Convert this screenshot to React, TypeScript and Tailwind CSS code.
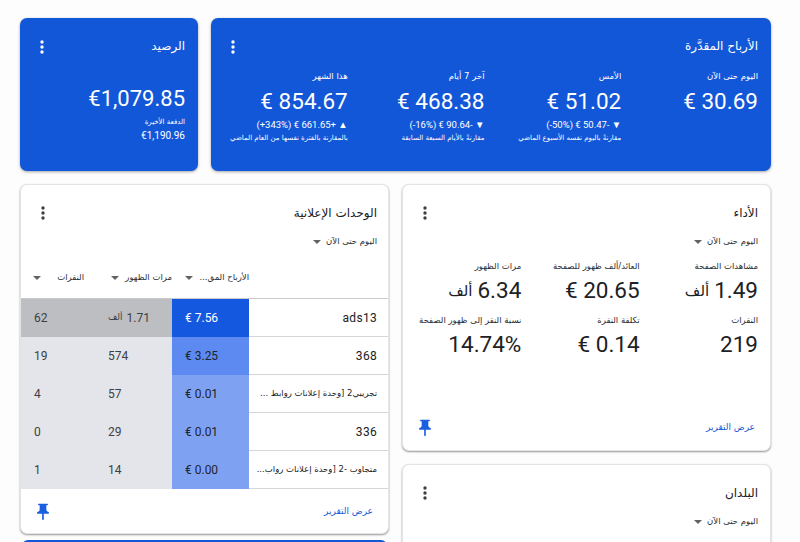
const Dots = ({ className = "" }: { className?: string }) => (
  <svg width="4" height="14" viewBox="0 0 4 14" className={className} fill="currentColor">
    <circle cx="2" cy="2" r="1.7" />
    <circle cx="2" cy="7" r="1.7" />
    <circle cx="2" cy="12" r="1.7" />
  </svg>
);

const Caret = ({ className = "" }: { className?: string }) => (
  <svg width="8" height="4" viewBox="0 0 8 4" className={className} fill="currentColor">
    <path d="M0 0h8L4 4z" />
  </svg>
);

const Pin = () => (
  <svg width="20" height="20" viewBox="0 0 24 24" fill="#1a5fe0">
    <path d="M16 9V4h1c.55 0 1-.45 1-1s-.45-1-1-1H7c-.55 0-1 .45-1 1s.45 1 1 1h1v5c0 1.66-1.34 3-3 3v2h5.97v7l1 1 1-1v-7H19v-2c-1.66 0-3-1.34-3-3z" />
  </svg>
);

const earnings = [
  { label: "اليوم حتى الآن", value: "€ 30.69", delta: "", cmp: "" },
  { label: "الأمس", value: "€ 51.02", delta: "(-50%) € 50.47- ▼", cmp: "مقارنةً باليوم نفسه الأسبوع الماضي" },
  { label: "آخر 7 أيام", value: "€ 468.38", delta: "(-16%) € 90.64- ▼", cmp: "مقارنةً بالأيام السبعة السابقة" },
  { label: "هذا الشهر", value: "€ 854.67", delta: "(+343%) € 661.65+ ▲", cmp: "بالمقارنة بالفترة نفسها من العام الماضي" },
];

const perf = [
  { label: "مشاهدات الصفحة", value: "1.49", unit: "ألف" },
  { label: "العائد/ألف ظهور للصفحة", value: "€ 20.65", unit: "" },
  { label: "مرات الظهور", value: "6.34", unit: "ألف" },
  { label: "النقرات", value: "219", unit: "" },
  { label: "تكلفة النقرة", value: "€ 0.14", unit: "" },
  { label: "نسبة النقر إلى ظهور الصفحة", value: "14.74%", unit: "" },
];

const rows = [
  { name: "ads13", ar: false, earn: "€ 7.56", imp: "1.71", unit: "ألف", clicks: "62", blue: "bg-[#1558e0] text-white", gray: "bg-[#bdbec2]" },
  { name: "368", ar: false, earn: "€ 3.25", imp: "574", unit: "", clicks: "19", blue: "bg-[#5c8af0] text-[#20242c]", gray: "bg-[#e3e5ea]" },
  { name: "تجريبي2 [وحدة إعلانات روابط ...", ar: true, earn: "€ 0.01", imp: "57", unit: "", clicks: "4", blue: "bg-[#7ea1f2] text-[#20242c]", gray: "bg-[#e3e5ea]" },
  { name: "336", ar: false, earn: "€ 0.01", imp: "29", unit: "", clicks: "0", blue: "bg-[#7ea1f2] text-[#20242c]", gray: "bg-[#e3e5ea]" },
  { name: "متجاوب -2 [وحدة إعلانات رواب...", ar: true, earn: "€ 0.00", imp: "14", unit: "", clicks: "1", blue: "bg-[#7ea1f2] text-[#20242c]", gray: "bg-[#e3e5ea]" },
];

const CardHead = ({ title, pad }: { title: string; pad: string }) => (
  <>
    <div className={`flex items-start justify-between ${pad} pl-[20px] pt-[20px] h-[48px]`}>
      <span className="text-[12px] leading-[17px] text-[#202124]">{title}</span>
      <Dots className="text-[#3c4043] mt-[1px]" />
    </div>
    <div className={`flex items-center gap-[5px] ${pad} h-[17px] text-[8.5px] text-[#2b2e33]`}>
      <span>اليوم حتى الآن</span>
      <Caret className="text-[#5f6368]" />
    </div>
  </>
);

const Footer = ({ h }: { h: string }) => (
  <div className={`flex items-center justify-between pr-[15px] pl-[12px] ${h}`}>
    <span className="text-[9px] text-[#1a56d0]">عرض التقرير</span>
    <Pin />
  </div>
);

export default function App() {
  return (
    <div
      dir="rtl"
      className="w-[800px] h-[542px] overflow-hidden bg-[#fdfdfd] pt-[18px] pr-[29px] pl-[20px]"
      style={{ fontFamily: '"DejaVu Sans", Roboto, sans-serif' }}
    >
      <div className="flex gap-[13px] h-[153px]">
        <section className="w-[560px] rounded-[7px] bg-[#1357d9] text-white shadow-[0_1px_3px_rgba(0,0,0,0.35)]">
          <div className="flex items-start justify-between pt-[21px] pr-[13px] pl-[20px] h-[48px]">
            <span className="text-[12px] leading-[15px]">الأرباح المقدَّرة</span>
            <Dots className="mt-[1px]" />
          </div>
          <div className="grid grid-cols-4 pr-[13px] mt-[1px]">
            {earnings.map((e) => (
              <div key={e.label} className="flex flex-col">
                <span className="text-[8.5px] leading-[18px]">{e.label}</span>
                <span dir="ltr" className="text-right text-[22.5px] leading-[33px] font-['Roboto']">{e.value}</span>
                {e.delta && (
                  <span dir="ltr" className="text-right text-[9.5px] leading-[13px] font-['Roboto'] whitespace-nowrap">{e.delta}</span>
                )}
                {e.cmp && <span className="text-[7px] leading-[14px] whitespace-nowrap">{e.cmp}</span>}
              </div>
            ))}
          </div>
        </section>
        <section className="w-[178px] rounded-[7px] bg-[#1357d9] text-white shadow-[0_1px_3px_rgba(0,0,0,0.35)] pr-[13px] pl-[20px]">
          <div className="flex items-start justify-between pt-[21px] h-[48px]">
            <span className="text-[12px] leading-[15px]">الرصيد</span>
            <Dots className="mt-[1px]" />
          </div>
          <div dir="ltr" className="text-right text-[22px] leading-[32px] mt-[17px] font-['Roboto']">€1,079.85</div>
          <div className="text-[7px] leading-[12px] mt-[1px]">الدفعة الأخيرة</div>
          <div dir="ltr" className="text-right text-[10px] leading-[14px] mt-[1px] font-['Roboto']">€1,190.96</div>
        </section>
      </div>

      <div className="flex gap-[13px] mt-[13px]">
        <div className="w-[369px] flex flex-col gap-[13px]">
          <section className="h-[267px] flex flex-col rounded-[7px] bg-white border border-[#e2e3e5] shadow-[0_1px_2px_rgba(0,0,0,0.4)]">
            <CardHead title="الأداء" pad="pr-[12px]" />
            <div className="grid grid-cols-3 pr-[12px] mt-[7px]">
              {perf.map((p) => (
                <div key={p.label} className="flex flex-col h-[54px]">
                  <span className="text-[8.5px] leading-[18px] text-[#2b2e33] whitespace-nowrap">{p.label}</span>
                  <span className="flex items-center gap-[5px] h-[32px] text-[22.5px] text-[#202124] font-['Roboto'] whitespace-nowrap">
                    <span dir="ltr">{p.value}</span>
                    {p.unit && <span className="text-[15px] font-['DejaVu_Sans']">{p.unit}</span>}
                  </span>
                </div>
              ))}
            </div>
            <div className="flex-1" />
            <Footer h="h-[44px]" />
          </section>
          <section className="h-[120px] rounded-[7px] bg-white border border-[#e2e3e5] shadow-[0_1px_2px_rgba(0,0,0,0.4)]">
            <CardHead title="البلدان" pad="pr-[12px]" />
          </section>
        </div>

        <div className="w-[369px] flex flex-col gap-[6px]">
          <section className="h-[350px] flex flex-col rounded-[7px] bg-white border border-[#e2e3e5] shadow-[0_1px_2px_rgba(0,0,0,0.4)] overflow-hidden">
            <CardHead title="الوحدات الإعلانية" pad="pr-[11px]" />
            <div className="flex items-center h-[49px] pt-[7px] text-[8.5px] text-[#2b2e33] border-b border-[#c9cacd]">
              <div className="w-[139px]" />
              <div className="w-[77px] flex items-center justify-between pl-[13px] whitespace-nowrap">
                <span>الأرباح المق...</span>
                <Caret className="text-[#5f6368]" />
              </div>
              <div className="w-[77px] flex items-center gap-[6px] whitespace-nowrap">
                <span>مرات الظهور</span>
                <Caret className="text-[#5f6368]" />
              </div>
              <div className="flex-1 flex items-center justify-between pl-[12px] pr-[11px] whitespace-nowrap">
                <span>النقرات</span>
                <Caret className="text-[#5f6368]" />
              </div>
            </div>
            {rows.map((r) => (
              <div key={r.name} className="flex h-[38px] text-[12px] text-[#3c4043] font-['Roboto']">
                <div className="w-[139px] flex items-center pr-[11px] border-b border-[#d5d6d8] text-[#202124] whitespace-nowrap overflow-hidden">
                  <span className={r.ar ? "text-[8.5px] font-['DejaVu_Sans']" : "tracking-[0.3px]"}>{r.name}</span>
                </div>
                <div className={`w-[77px] flex items-center justify-end pl-[13px] ${r.blue}`}>
                  <span dir="ltr">{r.earn}</span>
                </div>
                <div className={`flex-1 flex ${r.gray}`}>
                  <div className="w-[77px] flex items-center justify-end gap-[4px] pl-[13px]">
                    <span>{r.imp}</span>
                    {r.unit && <span className="text-[9px] font-['DejaVu_Sans']">{r.unit}</span>}
                  </div>
                  <div className="flex-1 flex items-center justify-end pl-[13px]">
                    <span>{r.clicks}</span>
                  </div>
                </div>
              </div>
            ))}
            <Footer h="flex-1 pt-[1px]" />
          </section>
          <section className="h-[120px] mx-[2px] rounded-t-[6px] bg-[#1357d9]" />
        </div>
      </div>
    </div>
  );
}
